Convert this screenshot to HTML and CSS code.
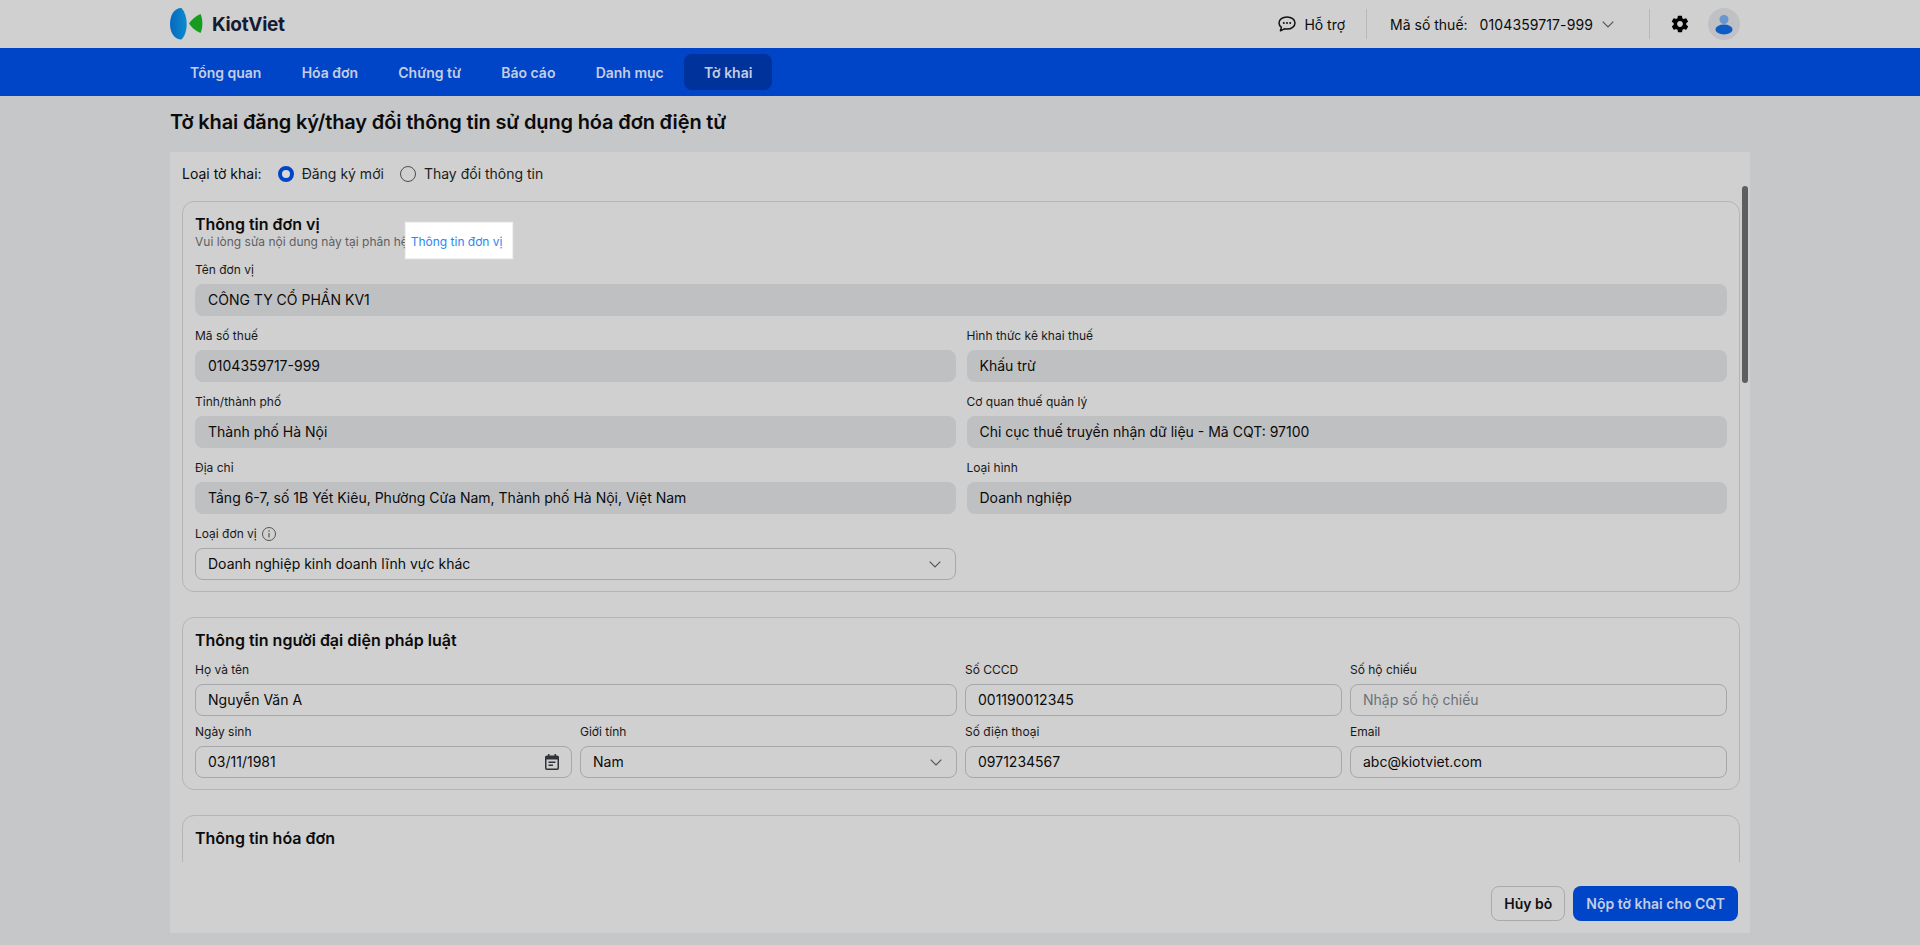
FILE: index.html
```html
<!DOCTYPE html>
<html lang="vi">
<head>
<meta charset="utf-8">
<title>Tờ khai</title>
<link rel="stylesheet" href="styles.css">
</head>
<body>
<header class="topbar">
  <div class="brand">
    <svg class="logo" width="33" height="32" viewBox="0 0 33 32">
      <defs>
        <linearGradient id="lb" x1="0" y1="0" x2="1" y2="0"><stop offset="0" stop-color="#0868c0"/><stop offset="1" stop-color="#0a8ccc"/></linearGradient>
      </defs>
      <path d="M11.500 0C3.500 0 0 8 0 16c0 8 4 15.500 11.500 15.500 3.500-3.500 5.200-9.500 5.200-15.500C16.700 10 15 4 11.500 0z" fill="url(#lb)"/>
      <path d="M30.500 6C25 8.500 21 12 19 15.500c2 3.500 6 7 11.500 9.500 2.500-5 2.500-14 0-19z" fill="#169c1e"/>
    </svg>
    <span class="brand-name">KiotViet</span>
  </div>
  <div class="top-right">
    <svg class="icon-chat" width="18" height="16" viewBox="0 0 18 16"><path d="M9 1C4.500 1 1 3.600 1 7c0 1.800 1 3.300 2.400 4.400l-1 3.400 4-2c.8.200 1.700.3 2.600.3 4.500 0 8-2.700 8-6.100S13.500 1 9 1z" fill="none" stroke="#111" stroke-width="1.500" stroke-linejoin="round"/><circle cx="5.800" cy="7" r="1" fill="#111"/><circle cx="9" cy="7" r="1" fill="#111"/><circle cx="12.200" cy="7" r="1" fill="#111"/></svg>
    <span class="top-help">Hỗ trợ</span>
    <span class="vline"></span>
    <span class="tax-label">Mã số thuế:</span>
    <span class="tax-value">0104359717-999</span>
    <svg class="chev-top" width="12" height="7" viewBox="0 0 12 7"><path d="M.7.7L6 6l5.300-5.300" fill="none" stroke="#555" stroke-width="1.200"/></svg>
    <span class="vline vline-2"></span>
    <svg class="icon-gear" width="20" height="20" viewBox="0 0 24 24"><path fill="#000" d="M19.400 13c.1-.3.1-.7.1-1s0-.7-.1-1l2.100-1.600c.2-.2.200-.4.100-.6l-2-3.500c-.1-.2-.4-.3-.6-.2l-2.500 1c-.5-.4-1.100-.7-1.700-1l-.4-2.700c0-.2-.2-.4-.5-.4h-4c-.2 0-.4.200-.5.400l-.4 2.700c-.6.200-1.200.6-1.700 1l-2.500-1c-.2-.1-.5 0-.6.200l-2 3.500c-.1.200-.1.500.1.600L4.500 11c0 .3-.1.700-.1 1s0 .7.1 1l-2.100 1.600c-.2.200-.2.400-.1.600l2 3.500c.1.200.4.300.6.200l2.500-1c.5.400 1.100.7 1.700 1l.4 2.700c0 .2.200.4.500.4h4c.2 0 .4-.2.500-.4l.4-2.700c.6-.2 1.200-.6 1.700-1l2.500 1c.2.100.5 0 .6-.2l2-3.500c.1-.2.100-.5-.1-.6L19.400 13zM12 15.500c-1.900 0-3.500-1.600-3.500-3.500s1.600-3.500 3.500-3.500 3.500 1.600 3.500 3.500-1.600 3.500-3.500 3.500z"/></svg>
    <span class="avatar">
      <svg width="32" height="32" viewBox="0 0 32 32"><circle cx="16" cy="11.500" r="4.500" fill="#6a96cf"/><ellipse cx="16" cy="21.500" rx="8.500" ry="5" fill="#0f5bc4"/></svg>
    </span>
  </div>
</header>

<nav class="navbar">
  <a class="nav-item">Tổng quan</a>
  <a class="nav-item">Hóa đơn</a>
  <a class="nav-item">Chứng từ</a>
  <a class="nav-item">Báo cáo</a>
  <a class="nav-item">Danh mục</a>
  <a class="nav-item nav-active">Tờ khai</a>
</nav>

<main class="page">
  <h1 class="page-title">Tờ khai đăng ký/thay đổi thông tin sử dụng hóa đơn điện tử</h1>
  <div class="panel">
    <div class="scroll">
      <div class="type-row">
        <span class="type-label">Loại tờ khai:</span>
        <span class="radio radio-on"></span><span class="radio-text">Đăng ký mới</span>
        <span class="radio"></span><span class="radio-text">Thay đổi thông tin</span>
      </div>

      <section class="card card-1">
        <h2 class="card-title">Thông tin đơn vị</h2>
        <p class="card-sub">Vui lòng sửa nội dung này tại phân hệ <span class="spot">Thông tin đơn vị</span></p>
        <div class="grid-2">
          <div class="field span-2"><label>Tên đơn vị</label><div class="input ro">CÔNG TY CỔ PHẦN KV1</div></div>
          <div class="field"><label>Mã số thuế</label><div class="input ro">0104359717-999</div></div>
          <div class="field"><label>Hình thức kê khai thuế</label><div class="input ro">Khấu trừ</div></div>
          <div class="field"><label>Tỉnh/thành phố</label><div class="input ro">Thành phố Hà Nội</div></div>
          <div class="field"><label>Cơ quan thuế quản lý</label><div class="input ro">Chi cục thuế truyền nhận dữ liệu - Mã CQT: 97100</div></div>
          <div class="field"><label>Địa chỉ</label><div class="input ro">Tầng 6-7, số 1B Yết Kiêu, Phường Cửa Nam, Thành phố Hà Nội, Việt Nam</div></div>
          <div class="field"><label>Loại hình</label><div class="input ro">Doanh nghiệp</div></div>
          <div class="field">
            <label>Loại đơn vị
              <svg class="info" width="16" height="16" viewBox="0 0 16 16"><circle cx="8" cy="8" r="6.500" fill="none" stroke="#555" stroke-width="1"/><path d="M8 7v4.500M8 4.300v1.400" stroke="#555" stroke-width="1.200"/></svg>
            </label>
            <div class="input edit">Doanh nghiệp kinh doanh lĩnh vực khác
              <svg class="chev" width="12" height="7" viewBox="0 0 12 7"><path d="M.7.7L6 6l5.300-5.300" fill="none" stroke="#555" stroke-width="1.200"/></svg>
            </div>
          </div>
        </div>
      </section>

      <section class="card card-2">
        <h2 class="card-title">Thông tin người đại diện pháp luật</h2>
        <div class="grid-4">
          <div class="field span-2"><label>Họ và tên</label><div class="input edit">Nguyễn Văn A</div></div>
          <div class="field"><label>Số CCCD</label><div class="input edit">001190012345</div></div>
          <div class="field"><label>Số hộ chiếu</label><div class="input edit ph">Nhập số hộ chiếu</div></div>
          <div class="field"><label>Ngày sinh</label><div class="input edit">03/11/1981
            <svg class="cal" width="14" height="16" viewBox="0 0 14 16"><path fill="#2f3338" d="M3 0h1.500v1.500h5V0H11v1.500h1.200A1.800 1.800 0 0 1 14 3.300v10.900a1.800 1.800 0 0 1-1.800 1.800H1.800A1.800 1.800 0 0 1 0 14.200V3.300a1.800 1.800 0 0 1 1.800-1.800H3V0zM1.500 5.500v8.700c0 .2.100.3.300.3h10.400c.2 0 .3-.1.300-.3V5.500h-11zM3.500 7.500h7V9h-7V7.500zm0 3h4.500V12H3.500v-1.500z"/></svg>
          </div></div>
          <div class="field"><label>Giới tính</label><div class="input edit">Nam
            <svg class="chev" width="12" height="7" viewBox="0 0 12 7"><path d="M.7.7L6 6l5.300-5.300" fill="none" stroke="#555" stroke-width="1.200"/></svg>
          </div></div>
          <div class="field"><label>Số điện thoại</label><div class="input edit">0971234567</div></div>
          <div class="field"><label>Email</label><div class="input edit">abc@kiotviet.com</div></div>
        </div>
      </section>

      <section class="card card-3">
        <h2 class="card-title">Thông tin hóa đơn</h2>
      </section>
    </div>
    <div class="thumb"></div>
    <div class="actions">
      <button class="btn btn-ghost">Hủy bỏ</button>
      <button class="btn btn-primary">Nộp tờ khai cho CQT</button>
    </div>
  </div>
</main>
</body>
</html>
```
FILE: styles.css
```css
* { box-sizing: border-box; }
html, body { margin: 0; height: 945px; overflow: hidden; }
body { background: #c6c7c9; color: #0b0b0c; font-family: Inter, "Noto Sans", sans-serif; font-size: 14px; }

.topbar { height: 48px; background: #d0d0d0; padding: 0 180px 0 170px; display: flex; align-items: center; justify-content: space-between; }
.brand { display: flex; align-items: center; gap: 9px; }
.logo { display: block; }
.brand-name { font-size: 19px; font-weight: 700; color: #141b33; letter-spacing: -.3px; }
.top-right { display: flex; align-items: center; }
.icon-chat { margin-right: 8px; }
.top-help { margin-right: 21px; }
.vline { width: 1px; height: 30px; background: #b6b7b9; margin-right: 23px; }
.tax-label { margin-right: 12px; }
.tax-value { margin-right: 9px; letter-spacing: .1px; }
.chev-top { margin-right: 35px; }
.vline-2 { margin-right: 20px; }
.icon-gear { margin-right: 18px; }
.avatar { width: 32px; height: 32px; border-radius: 50%; background: #c0c1c4; display: block; }
.avatar svg { display: block; }

.navbar { height: 48px; background: #0044c8; padding: 6px 170px; display: flex; gap: .2px; }
.nav-item { height: 36px; padding: 0 20px; border-radius: 8px; font-size: 14px; font-weight: 600; color: #c4cde2; display: flex; align-items: center; }
.nav-active { background: #00329b; }

.page { padding: 0 170px; }
.page-title { margin: 0; height: 56px; padding-top: 12px; font-size: 20px; line-height: 28px; font-weight: 600; letter-spacing: -.15px; color: #0b0b0c; }
.panel { position: relative; height: 781px; background: #d0d0d0; }
.scroll { height: 710px; overflow: hidden; padding: 0 10px 0 12px; }
.type-row { height: 49px; padding-bottom: 6px; display: flex; align-items: center; }
.type-label { margin-right: 16px; }
.radio { width: 16px; height: 16px; border-radius: 50%; border: 1px solid #4a4c50; margin-right: 8px; flex: none; background: transparent; }
.radio-on { border: 4.500px solid #0044c8; background: #d8d8d8; }
.radio-text { margin-right: 16px; color: #1c1d20; }

.card { border: 1px solid #b4b5b8; border-radius: 12px; padding: 12px; margin-bottom: 24px; width: 1558px; }
.card-title { margin: 0; font-size: 16px; line-height: 20px; font-weight: 600; }
.card-sub { position: relative; margin: 0; font-size: 12px; line-height: 16px; color: #5d5f64; }
.spot { display: inline-block; position: relative; color: #2a86f5; background: #fff; box-shadow: 0 0 1px 1px #f0f0f0; padding: 0 10px 0 5px; margin: -11px 0 -8px -5.500px; line-height: 38px; height: 35px; vertical-align: top; }

.card-1 { height: 391px; margin-bottom: 25px; }
.card-2 { height: 173px; margin-bottom: 25px; }
.card-3 { height: 60px; }
.grid-2 { display: grid; grid-template-columns: 1fr 1fr; column-gap: 11px; margin-top: 12px; }
.grid-4 { display: grid; grid-template-columns: repeat(4, 1fr); column-gap: 8px; margin-top: 12px; }
.span-2 { grid-column: span 2; }
.field { height: 66px; }
.grid-4 .field { height: 62px; }
.field label { display: flex; align-items: center; gap: 4px; height: 15px; margin-bottom: 7px; font-size: 12px; color: #17181b; }
.input { position: relative; height: 32px; border-radius: 8px; padding: 0 13px; line-height: 32px; font-size: 14px; white-space: nowrap; }
.ro { background: #bfc0c2; }
.edit { border: 1px solid #a6a7aa; padding-left: 12px; line-height: 30px; }
.ph { color: #6b7078; }
.chev { position: absolute; right: 14px; top: 12px; }
.cal { position: absolute; right: 12px; top: 7px; }

.thumb { position: absolute; left: 1572px; top: 34px; width: 6px; height: 197px; border-radius: 3px; background: #5f5f5f; }
.actions { display: flex; justify-content: flex-end; gap: 8px; padding: 24px 12px 0 0; }
.btn { height: 35px; border-radius: 8px; font-family: Inter, "Noto Sans", sans-serif; font-size: 14px; font-weight: 600; padding: 0 13px; }
.btn-ghost { background: transparent; border: 1px solid #a9aaad; color: #0f1013; padding: 0 12px; }
.btn-primary { background: #0044c8; border: 0; color: #c4cde2; }
```
